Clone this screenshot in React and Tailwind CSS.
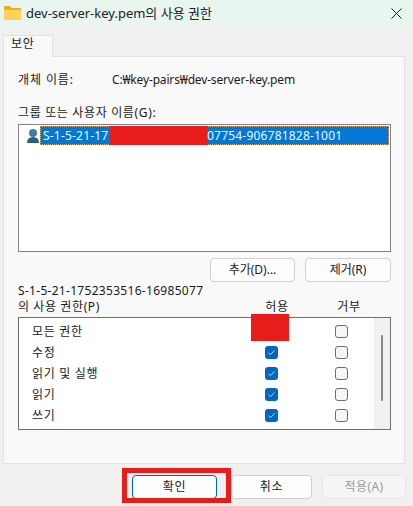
const font = { fontFamily: '"Noto Sans", "Noto Sans CJK KR", sans-serif' };

function Cb({ checked }) {
  if (checked) {
    return (
      <div className="w-[13px] h-[13px] rounded-[3px] bg-[#0067c0] flex items-center justify-center">
        <svg width="9" height="9" viewBox="0 0 9 9" fill="none">
          <path d="M1.5 4.8 L3.6 6.6 L7.5 2.4" stroke="#c9def2" strokeWidth="1" />
        </svg>
      </div>
    );
  }
  return <div className="w-[13px] h-[13px] rounded-[3px] bg-[#f6f6f6] border border-[#6e6e6e]" />;
}

function Btn({ children, className = "" }) {
  return (
    <div className={`flex items-center justify-center rounded-[4px] border border-[#d0d0d0] bg-[#fdfdfd] text-[12px] text-[#1a1a1a] ${className}`}>
      {children}
    </div>
  );
}

const rows = [
  ["모든 권한", false],
  ["수정", true],
  ["읽기 및 실행", true],
  ["읽기", true],
  ["쓰기", true],
];

export default function App() {
  return (
    <div style={font} className="relative w-[413px] h-[506px] bg-[#f0f0f0] overflow-hidden text-[12px] leading-[16px] text-[#1a1a1a]">
      {/* title bar */}
      <div className="h-[26px] bg-[#e9f5ef] flex items-center pl-[3px] pr-[11px]">
        <svg width="19" height="16" viewBox="0 0 19 16" className="mr-[4px]">
          <path d="M1 2 Q1 1 2 1 H7 L9 3 H17 Q18 3 18 4 V6 H1 Z" fill="#e9ae2e" />
          <path d="M1 5 H18 V14 Q18 15 17 15 H2 Q1 15 1 14 Z" fill="#fbd35b" />
        </svg>
        <span className="text-[13px] text-[#222] flex-1">dev-server-key.pem의 사용 권한</span>
        <svg width="11" height="11" viewBox="0 0 11 11">
          <path d="M0.5 0.5 L10.5 10.5 M10.5 0.5 L0.5 10.5" stroke="#222" strokeWidth="1" />
        </svg>
      </div>

      {/* tab strip */}
      <div className="h-[30px] pl-[3px] flex items-end">
        <div className="w-[50px] h-[22px] -mb-px relative bg-[#f9f9f9] border border-b-0 border-[#e2e2e2] pl-[7px] text-[12px] tracking-[0.6px]">보안</div>
      </div>

      {/* panel */}
      <div className="ml-[3px] w-[402px] h-[408px] bg-[#f9f9f9] border border-[#e2e2e2] pl-[14px] pt-[14px]">
        <div className="flex h-[17px] items-center">
          <span className="w-[94px] tracking-[0.9px]">개체 이름:</span>
          <span className="tracking-[-0.16px]">C:₩key-pairs₩dev-server-key.pem</span>
        </div>
        <div className="mt-[17px] h-[16px] tracking-[0.65px]">그룹 또는 사용자 이름(G):</div>
        <div className="mt-[3px] w-[373px] h-[128px] bg-white border border-[#82828a] p-px">
          <div className="flex items-center h-[19px]">
            <svg width="14" height="16" viewBox="0 0 14 16" className="ml-[6px]">
              <circle cx="7" cy="5" r="4" fill="#3f7ea6" />
              <path d="M1 15 Q1 9 7 9 Q13 9 13 15 Z" fill="#28607f" />
            </svg>
            <div className="flex-1 h-[19px] bg-[#0078d7] text-[#f2f8fd] border border-dotted border-[#e8a76a] pl-[2px] flex items-center whitespace-nowrap text-[12px] tracking-[0.2px]">
              <span className="w-[67px]">S-1-5-21-17</span>
              <span className="w-[97px] h-[19px] bg-[#e91c1c]" />
              <span>07754-906781828-1001</span>
            </div>
          </div>
        </div>

        <div className="mt-[6px] w-[373px] flex justify-end gap-[10px]">
          <Btn className="w-[85px] h-[24px]">추가(D)...</Btn>
          <Btn className="w-[86px] h-[24px]">제거(R)</Btn>
        </div>

        <div className="mt-[1px] w-[373px] flex items-end h-[34px]">
          <div className="w-[234px] leading-[16px] pb-[2px]">
            <div className="whitespace-nowrap tracking-[0.3px]">S-1-5-21-1752353516-16985077</div>
            <div className="tracking-[0.6px]">의 사용 권한(P)</div>
          </div>
          <div className="w-[50px] text-center pb-[2px] tracking-[0.6px]">허용</div>
          <div className="w-[22px]" />
          <div className="w-[50px] text-center pb-[2px] tracking-[0.6px]">거부</div>
        </div>

        <div className="w-[373px] h-[113px] bg-white border border-[#6e6e6e] flex">
          <div className="flex-1 flex flex-col pt-[3px]">
            {rows.map(([label, on]) => (
              <div key={label} className="h-[21px] flex items-center">
                <span className="w-[246px] pl-[13px] tracking-[0.7px]">{label}</span>
                <Cb checked={on} />
                <span className="w-[57px]" />
                <Cb />
              </div>
            ))}
          </div>
          <div className="w-[16px] bg-[#f0f0f0] flex justify-center pt-[17px]">
            <div className="w-[2px] h-[66px] bg-[#8a8a8a] rounded-full" />
          </div>
        </div>
      </div>

      {/* footer */}
      <div className="mt-[11px] flex pl-[132px] gap-[15px]">
        <Btn className="w-[85px] h-[24px] !border-[#0067c0] tracking-[0.6px]">확인</Btn>
        <div className="-ml-[1px] flex gap-[10px]">
          <Btn className="w-[81px] h-[24px] tracking-[0.6px]">취소</Btn>
          <Btn className="w-[84px] h-[24px] !border-[#e6e6e6] !bg-[#f5f5f5] !text-[#9a9a9a] tracking-[0.4px]">적용(A)</Btn>
        </div>
      </div>

      {/* redaction overlays */}
      <div className="absolute left-[251px] top-[314px] w-[38px] h-[27px] bg-[#e91c1c]" />
      <div className="absolute left-[122px] top-[468px] w-[109px] h-[35px] border-[5px] border-[#e91c1c]" />
    </div>
  );
}
